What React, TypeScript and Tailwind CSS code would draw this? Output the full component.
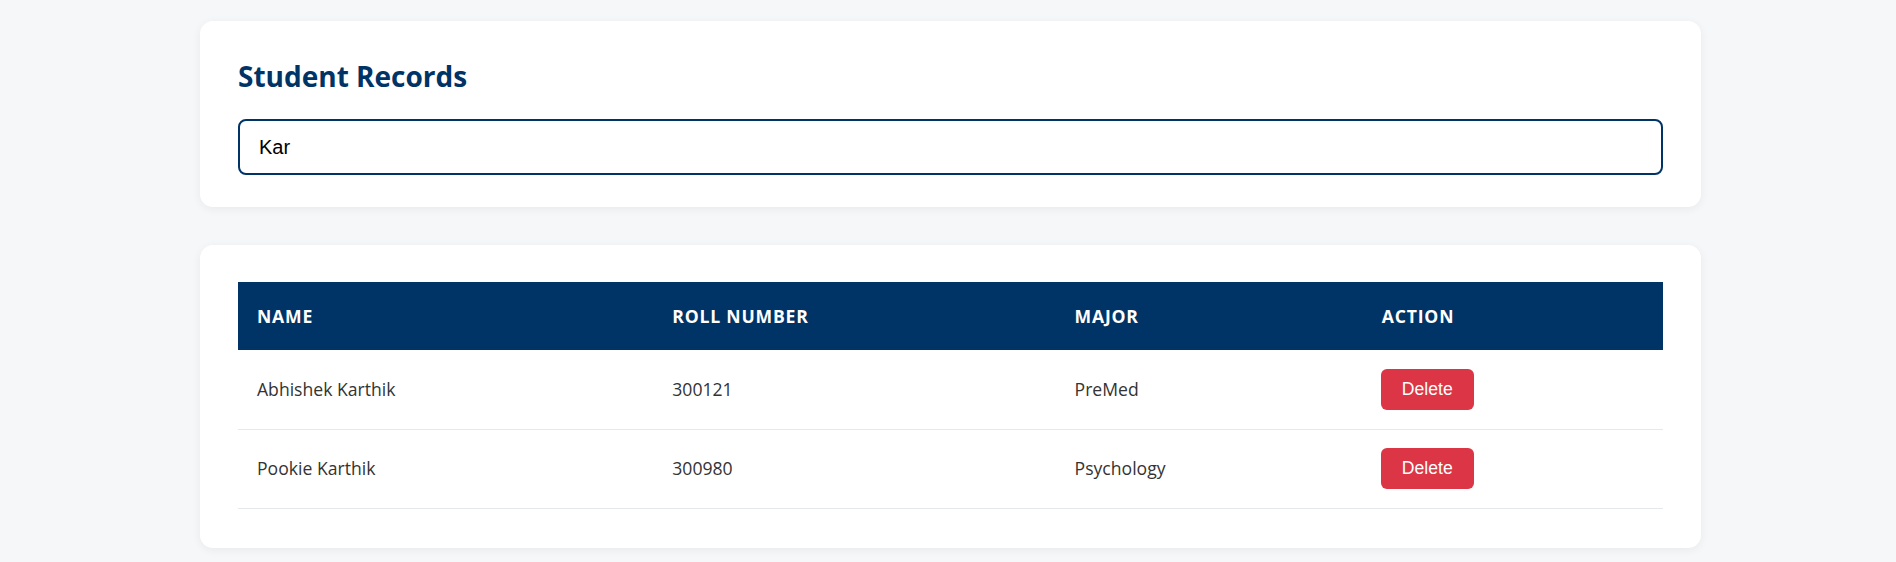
import { useState } from "react";

type Student = { name: string; roll: string; major: string };

const initial: Student[] = [
  { name: "Abhishek Karthik", roll: "300121", major: "PreMed" },
  { name: "Pookie Karthik", roll: "300980", major: "Psychology" },
];

export default function App() {
  const [query, setQuery] = useState("Kar");
  const [students, setStudents] = useState(initial);

  const shown = students.filter((s) =>
    s.name.toLowerCase().includes(query.toLowerCase())
  );

  return (
    <div className="min-h-screen bg-[#f6f7f9] pt-[21px] pb-[15px] font-['Open_Sans',sans-serif]">
      <div className="ml-[200px] flex w-[1501px] flex-col gap-[38px]">
        <section className="rounded-[13px] bg-white px-[38px] pt-[36px] pb-[32px] shadow-[0_2px_10px_rgba(0,0,0,0.06)]">
          <h1 className="text-[28px] leading-[38px] font-bold text-[#003366]">Student Records</h1>
          <input
            value={query}
            onChange={(e) => setQuery(e.target.value)}
            className="mt-[24px] block h-[56px] w-full rounded-[8px] border-2 border-[#003366] px-[19px] font-['Liberation_Sans',Arial,sans-serif] text-[20px] text-black outline-none"
          />
        </section>

        <section className="rounded-[13px] bg-white px-[38px] pt-[37px] pb-[39px] shadow-[0_2px_10px_rgba(0,0,0,0.06)]">
          <table className="w-full table-fixed border-collapse">
            <colgroup>
              <col className="w-[415px]" />
              <col className="w-[402px]" />
              <col className="w-[307px]" />
              <col className="w-[300px]" />
            </colgroup>
            <thead>
              <tr className="h-[68px] bg-[#003366] text-left text-[17.6px] font-bold tracking-[0.8px] text-white uppercase">
                <th className="px-[19px] font-bold">Name</th>
                <th className="px-[19px] font-bold">Roll Number</th>
                <th className="px-[19px] font-bold">Major</th>
                <th className="px-[19px] font-bold">Action</th>
              </tr>
            </thead>
            <tbody>
              {shown.map((s) => (
                <tr key={s.roll} className="h-[79px] border-b border-[#e6e8eb] text-[17.6px] text-[#333]">
                  <td className="px-[19px]">{s.name}</td>
                  <td className="px-[19px]">{s.roll}</td>
                  <td className="px-[19px]">{s.major}</td>
                  <td className="px-[18px]">
                    <button
                      onClick={() => setStudents(students.filter((x) => x.roll !== s.roll))}
                      className="h-[41px] w-[93px] rounded-[6px] bg-[#dc3545] font-['Liberation_Sans',Arial,sans-serif] text-[17.6px] text-white"
                    >
                      Delete
                    </button>
                  </td>
                </tr>
              ))}
            </tbody>
          </table>
        </section>
      </div>
    </div>
  );
}
